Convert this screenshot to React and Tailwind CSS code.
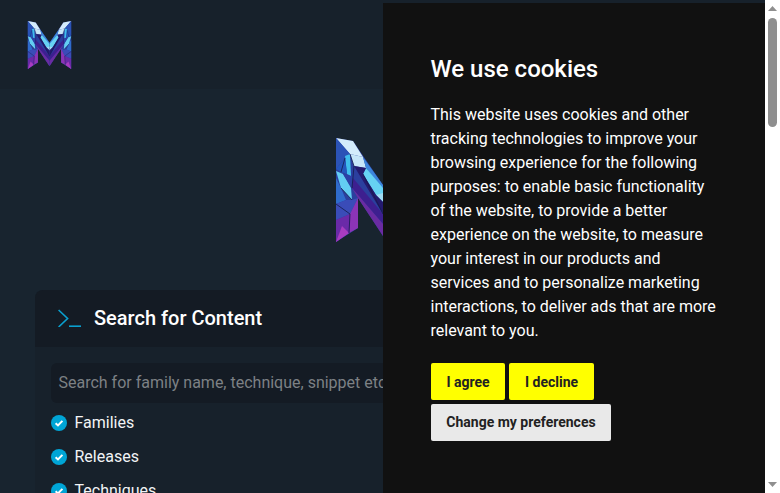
const facets = [
  ["0,0 17,3 47,47 47,98 22,60 22,90 0,104", "#2b3f9e"],
  ["0,0 17,3 27,19 14,16", "#d4ecfb"],
  ["0,0 14,16 9,20 0,31", "#2b53b6"],
  ["9,18 14,16 15,38 11,36", "#3fbdec"],
  ["14,16 27,19 30,30 18,28", "#c7e6f8"],
  ["0,31 9,20 11,36 5,34", "#2356bd"],
  ["0,33 7,36 15,50 16,62 5,50", "#63cdf2"],
  ["0,40 5,50 10,62 0,66", "#2f6ccc"],
  ["7,36 15,38 18,28 17,52", "#2c3fa6"],
  ["27,19 47,47 47,53 30,30", "#3c86dc"],
  ["30,30 47,50 47,58 40,57 27,36", "#66d2f3"],
  ["40,57 47,55 47,64", "#9fdcf4"],
  ["18,28 30,30 27,36 40,57 47,64 47,76", "#241a6e"],
  ["17,40 47,76 47,86 16,50", "#3d1f8f"],
  ["16,50 47,86 47,98 22,60", "#6a2ba2"],
  ["0,66 10,62 16,62 22,60 14,76 0,82", "#3a4cb8"],
  ["14,76 22,60 22,90 13,95", "#8b34b6"],
  ["0,82 14,76 13,95 0,104", "#6a2aa8"],
  ["0,104 6,88 13,95", "#a83cc0"],
];

const cracks = "M14 16 18 28M9 20 5 34M18 28 16 50M5 50 16 62M0 66 14 76M27 36 47 76M14 76 13 95";

function Logo({ className }) {
  const half = (
    <>
      {facets.map(([p, f]) => <polygon key={p} points={p} fill={f} />)}
      <path d={cracks} fill="none" stroke="#141a4a" strokeWidth="0.8" />
    </>
  );
  return (
    <svg viewBox="0 0 94 104" className={className}>
      {half}
      <g transform="matrix(-1 0 0 1 94 0)">{half}</g>
    </svg>
  );
}

function Check({ label }) {
  return (
    <div className="flex h-[34px] shrink-0 items-center gap-[7.5px]">
      <svg viewBox="0 0 16 16" className="h-4 w-4 shrink-0">
        <circle cx="8" cy="8" r="8" fill="#00a5d6" />
        <path d="M4.6 8.2 7 10.4 11.4 5.9" fill="none" stroke="#fff" strokeWidth="2" />
      </svg>
      <span className="text-base text-[#f2f4f6]">{label}</span>
    </div>
  );
}

export default function App() {
  return (
    <div className="relative flex h-[493px] w-[780px] overflow-hidden bg-[#18242f] font-['Roboto',sans-serif]">
      <main className="flex w-[765px] flex-col">
        <header className="flex h-[89px] shrink-0 items-center bg-[#17212b] pl-[27px] pt-[1px]">
          <Logo className="h-[48px] w-[45px]" />
        </header>
        <div className="flex justify-center pt-[49px]">
          <Logo className="h-[104px] w-[94px]" />
        </div>
        <section className="mx-[35px] mt-[48px] flex flex-col rounded-t-lg bg-[#17212b]">
          <div className="flex h-[57px] shrink-0 items-center gap-[13px] rounded-t-lg bg-[#141b24] pb-[2px] pl-[23px]">
            <svg viewBox="0 0 23 18" className="h-[18px] w-[23px]" fill="none" stroke="#0aa0cf" strokeWidth="1.6">
              <path d="M0.6 1 9.6 9.5 0.6 18" />
              <path d="M11 17.2H23" />
            </svg>
            <h2 className="text-xl font-medium text-white">Search for Content</h2>
          </div>
          <div className="flex flex-col px-4 pt-4">
            <div className="flex h-10 shrink-0 items-center rounded-md bg-[#141b24] px-[7.5px] text-base text-[#7d8185]">
              Search for family name, technique, snippet etc.
            </div>
            <div className="flex flex-col pt-[3px]">
              <Check label="Families" />
              <Check label="Releases" />
              <Check label="Techniques" />
            </div>
          </div>
        </section>
      </main>
      <aside className="flex h-full w-[15px] shrink-0 flex-col items-center bg-white">
        <svg viewBox="0 0 9 5" className="mt-[6px] h-[5px] w-[9px]"><path d="M4.5 0 9 5H0z" fill="#8f8f8f" /></svg>
        <div className="mt-[7px] h-[109px] w-[9px] rounded-[4.5px] bg-[#8f8f8f]" />
        <svg viewBox="0 0 9 5" className="mb-[6px] mt-auto h-[5px] w-[9px]"><path d="M0 0H9L4.5 5z" fill="#8f8f8f" /></svg>
      </aside>
      <div className="absolute bottom-0 left-[383px] top-[3px] w-[382px] bg-[#111111] pl-[47.5px] pr-12 pt-[48px] text-white">
        <h1 className="text-2xl leading-9 font-medium">We use cookies</h1>
        <p className="mt-[16px] text-base leading-6">
          This website uses cookies and other tracking technologies to improve your browsing experience for the following purposes: to enable basic functionality of the website, to provide a better experience on the website, to measure your interest in our products and services and to personalize marketing interactions, to deliver ads that are more relevant to you.
        </p>
        <div className="mt-[20px] flex flex-wrap gap-1">
          <button className="h-[37px] w-[74px] rounded-[2px] bg-[#ffff00] pl-[1px] text-sm font-bold text-[#222222]">I agree</button>
          <button className="h-[37px] w-[85px] rounded-[2px] bg-[#ffff00] pl-[1px] text-sm font-bold text-[#222222]">I decline</button>
          <button className="h-[37px] w-[180px] rounded-[2px] bg-[#e9e9e9] pb-[1px] pl-[1px] text-sm font-bold text-[#222222]">Change my preferences</button>
        </div>
      </div>
    </div>
  );
}
